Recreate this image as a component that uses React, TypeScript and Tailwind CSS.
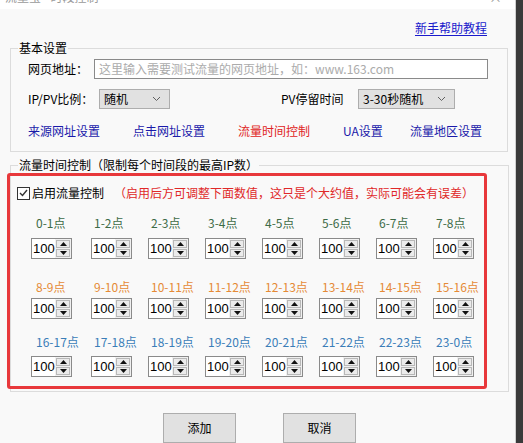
import React from 'react';

const CJK = "font-['Noto_Sans_CJK_SC','Noto_Sans',sans-serif]";

const rows = [
    {
        color: 'text-[#3d6b47]',
        mt: 'mt-[16px]',
        gap: 'mt-[8px]',
        labels: ['0-1点', '1-2点', '2-3点', '3-4点', '4-5点', '5-6点', '6-7点', '7-8点'],
    },
    {
        color: 'text-[#e58a36]',
        mt: 'mt-[21px]',
        gap: 'mt-[4px]',
        labels: ['8-9点', '9-10点', '10-11点', '11-12点', '12-13点', '13-14点', '14-15点', '15-16点'],
    },
    {
        color: 'text-[#3a7db8]',
        mt: 'mt-[16px]',
        gap: 'mt-[7px]',
        labels: ['16-17点', '17-18点', '18-19点', '19-20点', '20-21点', '21-22点', '22-23点', '23-0点'],
    },
];

function Chevron() {
    return (
        <svg width="9" height="6" viewBox="0 0 9 6" className="shrink-0">
            <path d="M1 1 L4.5 4.5 L8 1" fill="none" stroke="#606060" strokeWidth="1"/>
        </svg>
    )
}

function Select({value, width}: {value: string, width: string}) {
    return (
        <div className={`flex h-[20px] items-center justify-between border border-[#adadad] bg-[#e1e1e1] pl-[4px] pr-[8px] ${width}`}>
            <span className="text-[12px] leading-[14px] text-black">{value}</span>
            <Chevron/>
        </div>
    )
}

function Spin() {
    return (
        <div className="flex h-[21px] w-[41px] border border-[#8a8a8a] bg-white">
            <div className="flex-1 pl-[1px] font-['Liberation_Sans',sans-serif] text-[13px] leading-[19px] text-black">100</div>
            <div className="flex w-[16px] flex-col gap-px bg-[#f0f0f0] p-px">
                <div className="flex flex-1 items-center justify-center border border-[#b8b8b8] bg-[#ebebeb]">
                    <svg width="7" height="4" viewBox="0 0 7 4"><path d="M0 4 L3.5 0 L7 4 Z" fill="#111"/></svg>
                </div>
                <div className="flex flex-1 items-center justify-center border border-[#b8b8b8] bg-[#ebebeb]">
                    <svg width="7" height="4" viewBox="0 0 7 4"><path d="M0 0 L3.5 4 L7 0 Z" fill="#111"/></svg>
                </div>
            </div>
        </div>
    )
}

export default function App() {
    return (
        <div className={`flex h-[443px] w-[523px] overflow-hidden bg-[#f9f9f9] ${CJK}`}>
            <div className="flex w-[516px] flex-col border-r border-[#cfcfcf]">
                {/* clipped title bar */}
                <div className="flex h-[9px] items-start justify-between overflow-hidden bg-white px-[5px]">
                    <span className="-mt-[10px] text-[12px] leading-[14px] text-[#9a9a9a]">流量宝 - 时段控制</span>
                    <span className="-mt-[10px] pr-[8px] text-[13px] leading-[14px] text-[#9a9a9a]">×</span>
                </div>

                <div className="mt-[12px] flex justify-end pr-[28px]">
                    <span className="text-[12px] leading-[14px] text-[#1a1acc] underline underline-offset-2">新手帮助教程</span>
                </div>

                <fieldset className="ml-[10px] mt-[5px] w-[498px] border border-[#dcdcdc] pb-[13px]">
                    <legend className="ml-[7px] px-[1px] text-[12px] leading-[16px] text-black">基本设置</legend>
                    <div className="mt-[3px] flex items-center pl-[17px]">
                        <span className="w-[66px] text-[12px] leading-[14px] text-black">网页地址：</span>
                        <div className="flex h-[20px] w-[394px] items-center border border-[#8a8a8a] bg-white pl-[4px]">
                            <span className="text-[12px] leading-[14px] text-[#ababab]">这里输入需要测试流量的网页地址，如：www.163.com</span>
                        </div>
                    </div>
                    <div className="mt-[10px] flex items-center pl-[17px]">
                        <span className="w-[71px] text-[12px] leading-[14px] text-black">IP/PV比例：</span>
                        <Select value="随机" width="w-[71px]"/>
                        <span className="ml-[111px] w-[77px] text-[12px] leading-[14px] text-black">PV停留时间</span>
                        <Select value="3-30秒随机" width="w-[97px]"/>
                    </div>
                    <div className="mt-[15px] flex pl-[17px] text-[12px] leading-[14px]">
                        <span className="w-[105px] text-[#1a1aaa]">来源网址设置</span>
                        <span className="w-[105px] text-[#1a1aaa]">点击网址设置</span>
                        <span className="w-[105px] text-[#e02424]">流量时间控制</span>
                        <span className="w-[67px] text-[#1a1aaa]">UA设置</span>
                        <span className="text-[#1a1aaa]">流量地区设置</span>
                    </div>
                </fieldset>

                <fieldset className="ml-[10px] mt-[5px] w-[499px] border border-[#dcdcdc] pb-[2px]">
                    <legend className="ml-[7px] px-[1px] text-[12px] leading-[16px] text-black">流量时间控制（限制每个时间段的最高IP数）</legend>
                    <div className="-ml-[4px] w-[480px] rounded-[3px] border-[3px] border-[#e8383b] pb-[9px]">
                        <div className="mt-[10px] flex items-center pl-[7px]">
                            <div className="flex h-[13px] w-[13px] items-center justify-center border border-[#333] bg-white">
                                <svg width="9" height="8" viewBox="0 0 9 8">
                                    <path d="M1 4 L3.5 6.5 L8 1" fill="none" stroke="#333" strokeWidth="1.4"/>
                                </svg>
                            </div>
                            <span className="ml-[2px] text-[12px] leading-[14px] text-black">启用流量控制</span>
                            <span className="ml-[10px] text-[12px] leading-[14px] text-[#e02828]">（启用后方可调整下面数值，这只是个大约值，实际可能会有误差）</span>
                        </div>

                        {rows.map((row, r) => (
                            <div key={r} className={`grid grid-cols-[60px_repeat(7,57px)] pl-[21px] ${row.mt}`}>
                                {row.labels.map((label, i) => (
                                    <div key={label} className="flex flex-col">
                                        <span className={`text-[12px] leading-[14px] ${row.color} ${i === 0 ? 'pl-[5px]' : 'pl-[3px]'}`}>{label}</span>
                                        <div className={row.gap}>
                                            <Spin/>
                                        </div>
                                    </div>
                                ))}
                            </div>
                        ))}
                    </div>
                </fieldset>

                <div className="mt-[21px] flex gap-[47px] pl-[163px]">
                    <button className="h-[30px] w-[73px] border border-[#adadad] bg-[#e1e1e1] text-[12px] text-black">添加</button>
                    <button className="h-[30px] w-[73px] border border-[#adadad] bg-[#e1e1e1] text-[12px] text-black">取消</button>
                </div>
            </div>
            <div className="flex-1 bg-[#3a3a3a]"/>
        </div>
    )
}
